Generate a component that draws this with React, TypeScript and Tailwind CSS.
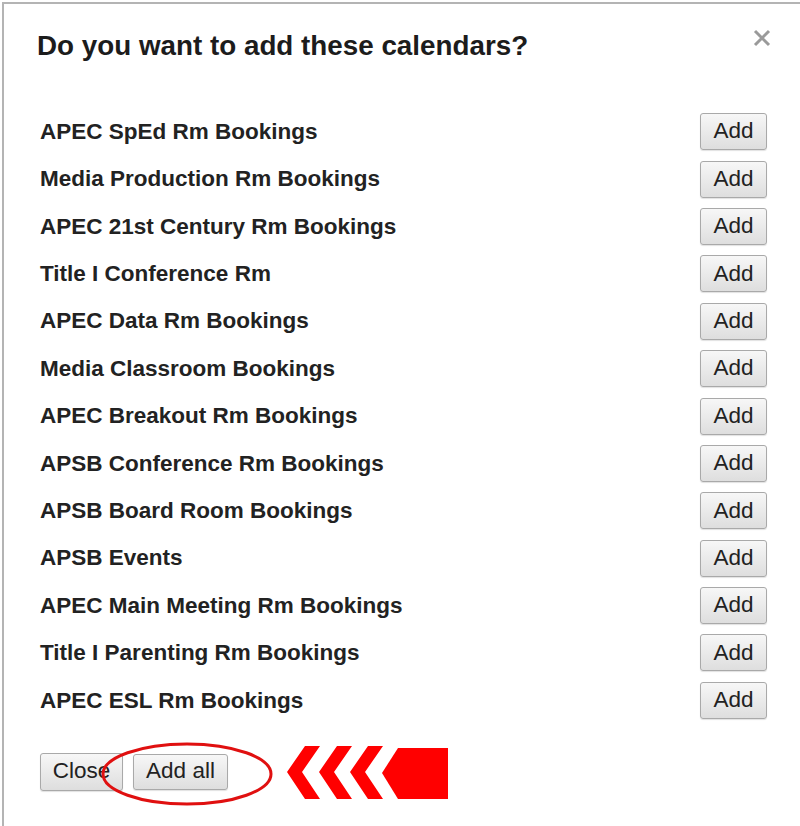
const calendars = [
  "APEC SpEd Rm Bookings",
  "Media Production Rm Bookings",
  "APEC 21st Century Rm Bookings",
  "Title I Conference Rm",
  "APEC Data Rm Bookings",
  "Media Classroom Bookings",
  "APEC Breakout Rm Bookings",
  "APSB Conference Rm Bookings",
  "APSB Board Room Bookings",
  "APSB Events",
  "APEC Main Meeting Rm Bookings",
  "Title I Parenting Rm Bookings",
  "APEC ESL Rm Bookings",
];

function GrayButton({ label, className }: { label: string; className: string }) {
  return (
    <button
      className={`flex items-center justify-center rounded-[3px] border border-[#a9a9a9] bg-gradient-to-b from-[#f7f7f7] to-[#dedede] text-[22.5px] leading-none text-[#222] shadow-[0_1px_1px_rgba(0,0,0,0.12)] ${className}`}
    >
      {label}
    </button>
  );
}

function Arrows() {
  return (
    <svg width="164" height="56" viewBox="0 0 164 56" className="ml-[58px] mt-[3px]">
      {[0, 32, 63].map((x) => (
        <polygon
          key={x}
          fill="#ff0000"
          points={`${x + 1},27 ${x + 19},1 ${x + 34},1 ${x + 16},27 ${x + 34},54 ${x + 19},54`}
        />
      ))}
      <polygon fill="#ff0000" points="96,28 112,3 162,3 162,54 112,54" />
    </svg>
  );
}

export default function App() {
  return (
    <div className="min-h-[826px] bg-white pl-[2px] pt-[2px] font-['Liberation_Sans',Arial,sans-serif]">
      <div className="border-l-2 border-t-2 border-[#b4b4b4] pb-[32px] pl-[36px] pr-[33px] pt-[26px]">
        <div className="flex items-start justify-between">
          <h1 className="-ml-[3px] text-[27.8px] font-bold leading-[32px] text-[#1c1c1c]">
            Do you want to add these calendars?
          </h1>
          <svg width="18" height="18" viewBox="0 0 18 18" className="mr-[-4px] mt-[-1px]">
            <path d="M2 2 L16 16 M16 2 L2 16" stroke="#9a9a9a" strokeWidth="3" />
          </svg>
        </div>

        <ul className="mt-[46px]">
          {calendars.map((name) => (
            <li key={name} className="flex h-[47.4px] items-center justify-between">
              <span className="text-[22.5px] font-bold text-[#222]">{name}</span>
              <GrayButton label="Add" className="h-[37px] w-[67px]" />
            </li>
          ))}
        </ul>

        <div className="relative mt-[18px] flex items-center">
          <GrayButton label="Close" className="h-[38px] w-[83px]" />
          <GrayButton label="Add all" className="ml-[10px] h-[36px] w-[95px]" />
          <Arrows />
          <svg
            width="176"
            height="68"
            viewBox="0 0 176 68"
            className="pointer-events-none absolute left-[59px] top-[-2px]"
          >
            <ellipse cx="88" cy="34" rx="84" ry="30" fill="none" stroke="#e01010" strokeWidth="3" />
          </svg>
        </div>
      </div>
    </div>
  );
}
